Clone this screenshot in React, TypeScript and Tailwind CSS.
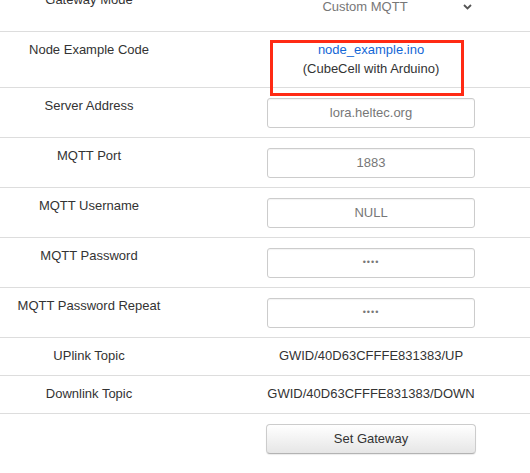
import React from "react";

const Label = ({ children }: { children: React.ReactNode }) => (
  <div className="pt-[9px] pb-[10px] text-center leading-[18px]">{children}</div>
);

const Field = ({ value, small }: { value: string; small?: boolean }) => (
  <div className="pt-[10px] pb-[9px] flex justify-center">
    <div
      className={`w-[208px] h-[30px] border border-[#ccc] rounded-[3px] bg-white flex items-center justify-center text-[#777] shadow-[inset_0_1px_1px_rgba(0,0,0,0.05)] ${small ? "text-[9px] tracking-[1px]" : ""}`}
    >
      {value}
    </div>
  </div>
);

const Row = ({ children }: { children: React.ReactNode }) => (
  <div className="grid grid-cols-[178px_1fr] border-b border-[#ddd]">{children}</div>
);

export default function App() {
  return (
    <div className="w-[530px] h-[473px] overflow-hidden bg-white text-[13px] text-[#333] font-['Liberation_Sans',Arial,sans-serif]">
      <div className="-mt-[18px] relative">
        <Row>
          <Label>Gateway Mode</Label>
          <div className="pt-[10px] pb-[9px] pl-[34px] flex justify-center">
            <div className="relative w-[208px] h-[30px] flex items-center text-[#777]">
              <div className="flex-1 text-center pr-[12px]">Custom MQTT</div>
              <svg
                className="absolute right-[3px] top-[12px]"
                width="9"
                height="6"
                viewBox="0 0 9 6"
                fill="none"
              >
                <path d="M1 1l3.5 3.5L8 1" stroke="#555" strokeWidth="1.8" />
              </svg>
            </div>
          </div>
        </Row>
        <Row>
          <Label>Node Example Code</Label>
          <div className="pt-[9px] pb-[9px] pl-[34px] text-center leading-[18.5px]">
            <a className="text-[#1467d6] block">node_example.ino</a>
            <div>(CubeCell with Arduino)</div>
          </div>
        </Row>
        <Row>
          <Label>Server Address</Label>
          <div className="pl-[34px]">
            <Field value="lora.heltec.org" />
          </div>
        </Row>
        <Row>
          <Label>MQTT Port</Label>
          <div className="pl-[34px]">
            <Field value="1883" />
          </div>
        </Row>
        <Row>
          <Label>MQTT Username</Label>
          <div className="pl-[34px]">
            <Field value="NULL" />
          </div>
        </Row>
        <Row>
          <Label>MQTT Password</Label>
          <div className="pl-[34px]">
            <Field value="••••" small />
          </div>
        </Row>
        <Row>
          <Label>MQTT Password Repeat</Label>
          <div className="pl-[34px]">
            <Field value="••••" small />
          </div>
        </Row>
        <Row>
          <Label>UPlink Topic</Label>
          <div className="pl-[34px]">
            <Label>GWID/40D63CFFFE831383/UP</Label>
          </div>
        </Row>
        <Row>
          <Label>Downlink Topic</Label>
          <div className="pl-[34px]">
            <Label>GWID/40D63CFFFE831383/DOWN</Label>
          </div>
        </Row>
        <div className="grid grid-cols-[178px_1fr]">
          <div />
          <div className="pl-[34px] pt-[10px] flex justify-center">
            <button className="w-[210px] h-[30px] rounded-[4px] border border-[#ccc] border-b-[#b3b3b3] bg-gradient-to-b from-white to-[#e6e6e6] text-[#333] text-[13px] shadow-[0_1px_1px_rgba(0,0,0,0.08)]">
              Set Gateway
            </button>
          </div>
        </div>
        <div className="absolute left-[270px] top-[58px] w-[194px] h-[56px] border-[3px] border-[#ff2a14]" />
      </div>
    </div>
  );
}
